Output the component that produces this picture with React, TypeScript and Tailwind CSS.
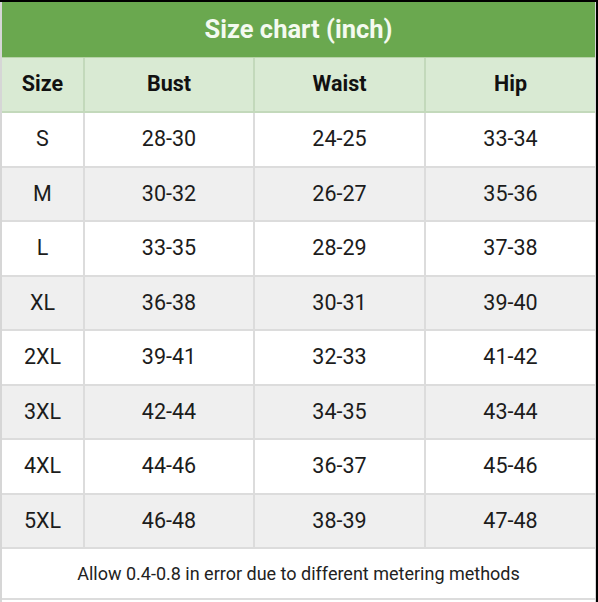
import React from 'react';

const rows = [
  ['S', '28-30', '24-25', '33-34'],
  ['M', '30-32', '26-27', '35-36'],
  ['L', '33-35', '28-29', '37-38'],
  ['XL', '36-38', '30-31', '39-40'],
  ['2XL', '39-41', '32-33', '41-42'],
  ['3XL', '42-44', '34-35', '43-44'],
  ['4XL', '44-46', '36-37', '45-46'],
  ['5XL', '46-48', '38-39', '47-48'],
];

const App: React.FC = () => {
  return (
    <div className="w-[598px] h-[602px] bg-white border-t-2 border-r-2 border-black font-['Roboto',sans-serif] overflow-hidden">
      <div className="h-full border-l-2 border-r border-[#d6d6d6]">
        {/* Title */}
        <div className="h-[56px] bg-[#6aa84f] flex items-center justify-center border-b border-[#b7d3a8]">
          <span className="text-[25.5px] font-bold text-[#f4faf0]">Size chart (inch)</span>
        </div>

        {/* Column headers */}
        <div className="grid grid-cols-[83px_170px_171px_1fr] h-[55px] bg-[#d9ead3] border-b-2 border-[#c3d9bb]">
          {['Size', 'Bust', 'Waist', 'Hip'].map((h, i) => (
            <div
              key={h}
              className={`flex items-center justify-center text-[21.5px] font-bold text-[#111] ${i < 3 ? 'border-r-2 border-[#c3d9bb]' : ''}`}
            >
              {h}
            </div>
          ))}
        </div>

        {/* Body */}
        {rows.map((r, ri) => (
          <div
            key={r[0]}
            className={`grid grid-cols-[83px_170px_171px_1fr] h-[54.5px] border-b-2 border-[#dcdcdc] ${ri % 2 === 1 ? 'bg-[#efefef]' : 'bg-white'}`}
          >
            {r.map((c, i) => (
              <div
                key={i}
                className={`flex items-center justify-center text-[21.5px] text-[#1c1c1c] ${i < 3 ? 'border-r-2 border-[#dcdcdc]' : ''}`}
              >
                {c}
              </div>
            ))}
          </div>
        ))}

        {/* Footer */}
        <div className="h-[51px] flex items-center justify-center border-b-2 border-[#dcdcdc]">
          <span className="text-[18px] text-[#222]">Allow 0.4-0.8 in error due to different metering methods</span>
        </div>
      </div>
    </div>
  );
};

export default App;
